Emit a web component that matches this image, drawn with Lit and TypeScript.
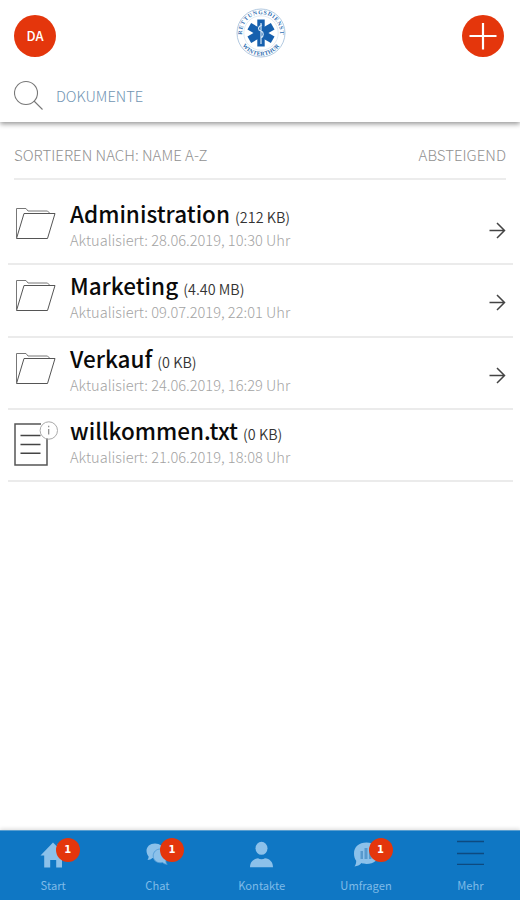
import { LitElement, html, svg, css } from "lit";
import { customElement } from "lit/decorators.js";

interface Entry { kind: "folder" | "file"; name: string; size: string; date: string; }
interface Tab { icon: string; label: string; badge?: number; }

const entries: Entry[] = [
  { kind: "folder", name: "Administration", size: "(212 KB)", date: "28.06.2019, 10:30 Uhr" },
  { kind: "folder", name: "Marketing", size: "(4.40 MB)", date: "09.07.2019, 22:01 Uhr" },
  { kind: "folder", name: "Verkauf", size: "(0 KB)", date: "24.06.2019, 16:29 Uhr" },
  { kind: "file", name: "willkommen.txt", size: "(0 KB)", date: "21.06.2019, 18:08 Uhr" },
];

const tabs: Tab[] = [
  { icon: "home", label: "Start", badge: 1 },
  { icon: "chat", label: "Chat", badge: 1 },
  { icon: "person", label: "Kontakte" },
  { icon: "poll", label: "Umfragen", badge: 1 },
  { icon: "menu", label: "Mehr" },
];

const glyphs: Record<string, unknown> = {
  home: svg`<path fill="#8cc1ea" d="M14 2.500 L18 6.500 V4.500 H21 V9.500 L27 15.500 H23 V27.500 H17.200 V20 H11.200 V27.500 H5.200 V15.500 H1.500 Z"/>`,
  chat: svg`<path fill="#8cc1ea" d="M12 3.500c5 0 8.500 3.200 8.500 7.300s-3.500 7.400-8.500 7.400c-1 0-1.800-.1-2.600-.3C8.400 19 6.500 19.800 4.400 20c.9-1.200 1.300-2.500 1.200-3.600C4.300 15 3.500 13 3.500 10.800c0-4.100 3.500-7.300 8.500-7.300z"/>
    <path fill="#8cc1ea" stroke="#4a98d6" stroke-width=".8" d="M17.500 9c4.300 0 7.300 3 7.300 6.900 0 2-.8 3.700-2 4.900 0 1.300.5 2.500 1.400 3.600-2-.1-3.500-.9-4.500-1.800-.7.100-1.400.2-2.200.2-4.300 0-7.300-3-7.300-6.900S13.200 9 17.500 9z"/>`,
  person: svg`<ellipse fill="#8cc1ea" cx="14.500" cy="8.300" rx="6" ry="6.500"/><path fill="#8cc1ea" d="M3 27.300c0-5.500 3.500-8.500 8-9 2 1.300 5 1.300 7 0 4.500.5 8 3.500 8 9z"/>`,
  poll: svg`<path fill="#8cc1ea" d="M14.500 2.500c7.500 0 12.500 4.500 12.500 10.700S22 24 14.500 24c-2 0-3.500-.3-5-.9C7.500 25.500 5.500 26.200 2.500 26.500c1.200-1.700 1.800-3.800 1.700-5.800C2.700 18.700 2 16.200 2 13.200 2 7 7 2.500 14.500 2.500z"/>
    <path fill="#5799cd" d="M8.500 11h2.500v8H8.500zM12.500 8h3v11h-3zM17 10h2.500v9H17z"/>`,
  menu: svg`<path stroke="#0d4a80" stroke-width="1.300" d="M1 1.500h27M1 13.500h27M1 24.300h27"/>`,
};

@customElement("file-icon")
class FileIcon extends LitElement {
  static properties = { kind: {} };
  declare kind: string;
  static styles = css`:host { display: block; width: 46px; height: 56px; } svg { display: block; }`;
  render() {
    return this.kind === "folder"
      ? html`<svg width="46" height="56" viewBox="0 -3 46 56" fill="none" stroke="#555" stroke-width="1">
          <path stroke="#777" d="M2.500 37.500V8.500H12l2 2.500H33.500l3 3"/>
          <path d="M2.500 38.500L10 13.500H41L33.500 38.500Z"/></svg>`
      : html`<svg width="46" height="56" viewBox="0 -5 46 56" fill="none" stroke="#555">
          <path stroke-width="1.500" d="M27 5H1V46H33V19.500"/>
          <path stroke="#444" stroke-width="1.400" d="M6.500 16.500H26.500M6.500 25.500H26.500M6.500 34.200H26.500"/>
          <circle cx="34.800" cy="11.500" r="8.700" stroke="#aaa" stroke-width="1"/>
          <path stroke="#888" stroke-width="1.200" d="M34.700 10V15.500M34.700 6.800V8.300"/></svg>`;
  }
}

@customElement("org-logo")
class OrgLogo extends LitElement {
  static styles = css`
    :host { display: block; width: 50px; height: 50px; }
    svg { display: block; }
    text { font-family: "Liberation Serif", serif; font-weight: 700; font-size: 5.800px; fill: #2e6eb0; }
  `;
  render() {
    return html`<svg width="50" height="50" viewBox="-25 -25 50 50">
      <defs>
        <path id="top" d="M-18.500 4.500A19 19 0 1 1 18.500 4.500"/>
        <path id="bottom" d="M-20.500 9.500A22.600 22.600 0 0 0 20.500 9.500"/>
      </defs>
      <circle r="24" fill="#fff" stroke="#a9c3dd" stroke-width=".9"/>
      <circle r="17.200" fill="none" stroke="#d3e1ee" stroke-width=".7"/>
      <g fill="#1660ae">
        <rect x="-3.700" y="-13.500" width="7.400" height="27"/>
        <rect x="-3.700" y="-13.500" width="7.400" height="27" transform="rotate(60)"/>
        <rect x="-3.700" y="-13.500" width="7.400" height="27" transform="rotate(-60)"/>
      </g>
      <path d="M0-10V11M1-8C-4-6-3-3 0-2S3 3 0 5" fill="none" stroke="#d5e6f5" stroke-width="1.200"/>
      <text textLength="62"><textPath href="#top" startOffset="3">RETTUNGSDIENST</textPath></text>
      <text letter-spacing=".3"><textPath href="#bottom" startOffset="50%" text-anchor="middle">WINTERTHUR</textPath></text>
    </svg>`;
  }
}

@customElement("app-root")
class AppRoot extends LitElement {
  static styles = css`
    :host { display: flex; flex-direction: column; height: 900px; background: #fff; color: #000; overflow: hidden;
      font-family: "Noto Sans CJK SC", "Noto Sans", sans-serif; white-space: nowrap; }
    * { box-sizing: border-box; }
    svg { display: block; flex: none; }
    header { height: 122px; flex: none; background: #fff; box-shadow: 0 2px 5px rgba(0,0,0,.42); padding: 7px 16px 0 14px; }
    .bar { display: grid; grid-template-columns: 1fr 50px 1fr; height: 58px; align-items: center; }
    .avatar { width: 42px; height: 42px; border-radius: 50%; background: #e4360c; color: #fff; font-size: 13px; font-weight: 500; line-height: 41px; text-align: center; }
    .add { justify-self: end; width: 42px; height: 42px; border-radius: 50%; background: #e4360c; }
    .logo { margin: -7px 0 0 2px; }
    .search { display: flex; align-items: center; gap: 12px; height: 40px; margin-top: 10px; color: #7195b3; font-size: 14.700px; font-weight: 300; }
    .sort { display: flex; justify-content: space-between; margin: 0 14px 0 14px; height: 58px; flex: none; border-bottom: 2px solid #ececec;
      color: #919191; font-size: 15px; line-height: 20px; padding-top: 23px; font-weight: 300; }
    .list { margin: 13px 7px 0 8px; flex: 1; }
    .row { display: flex; height: 72.300px; border-bottom: 2px solid #ebebeb; align-items: flex-start; padding: 3px 7px 0 6px; }
    .icon { margin-top: 1px; }
    .text { flex: 1; margin-left: 10px; }
    .title { font-size: 22.500px; font-weight: 500; line-height: 34px; height: 34px; color: #0a0a0a; }
    .size { font-size: 14.400px; font-weight: 350; color: #333; }
    .date { font-size: 14.620px; font-weight: 300; line-height: 20px; color: #a3a3a3; }
    .arrow { margin-top: 25px; }
    nav { flex: none; height: 70px; background: #0f77c4; display: grid; grid-template-columns: repeat(5, 104.300px); padding-left: 1px;
      box-shadow: 0 -1px 4px rgba(0,0,0,.15); border-top: 1px solid #5a9fd0; }
    .tab { display: flex; flex-direction: column; align-items: center; padding-top: 9px; color: #7fbbe8; font-size: 11.150px; line-height: 18px; }
    .glyph { position: relative; width: 29px; height: 36px; }
    .badge { position: absolute; left: 17px; top: -2px; width: 24px; height: 24px; border-radius: 50%; background: #e4360c; color: #fff;
      font: 700 10px/24px "DejaVu Sans", sans-serif; text-align: center; }
  `;
  render() {
    return html`
      <header>
        <div class="bar">
          <div class="avatar">DA</div>
          <org-logo class="logo"></org-logo>
          <div class="add"><svg width="42" height="42" viewBox="0 0 42 42"><path d="M21 8V34.500M7.500 21H34.500" stroke="#fff" stroke-width="2.200"/></svg></div>
        </div>
        <div class="search">
          <svg width="30" height="30" viewBox="0 0 30 30" fill="none" stroke="#777" stroke-width="1.100"><circle cx="12" cy="13" r="11.500"/><path d="M20 21L28.500 29.500"/></svg>
          <span class="query">DOKUMENTE</span>
        </div>
      </header>
      <div class="sort"><span class="by">SORTIEREN NACH: NAME A-Z</span><span class="dir">ABSTEIGEND</span></div>
      <div class="list">
        ${entries.map((e) => html`<div class="row">
          <file-icon class="icon" kind=${e.kind}></file-icon>
          <div class="text">
            <div class="title">${e.name} <span class="size">${e.size}</span></div>
            <div class="date">Aktualisiert: ${e.date}</div>
          </div>
          ${e.kind === "folder" ? html`<svg class="arrow" width="18" height="18" viewBox="0 0 18 18" fill="none" stroke="#444" stroke-width="1.500"><path d="M1.500 9.500H16.500M9 2L16.500 9.500L9 17"/></svg>` : ""}
        </div>`)}
      </div>
      <nav>
        ${tabs.map((t) => html`<div class="tab">
          <div class="glyph"><svg width="29" height="32" viewBox="0 0 29 32">${glyphs[t.icon]}</svg>${t.badge ? html`<span class="badge">${t.badge}</span>` : ""}</div>
          <span>${t.label}</span>
        </div>`)}
      </nav>`;
  }
}
